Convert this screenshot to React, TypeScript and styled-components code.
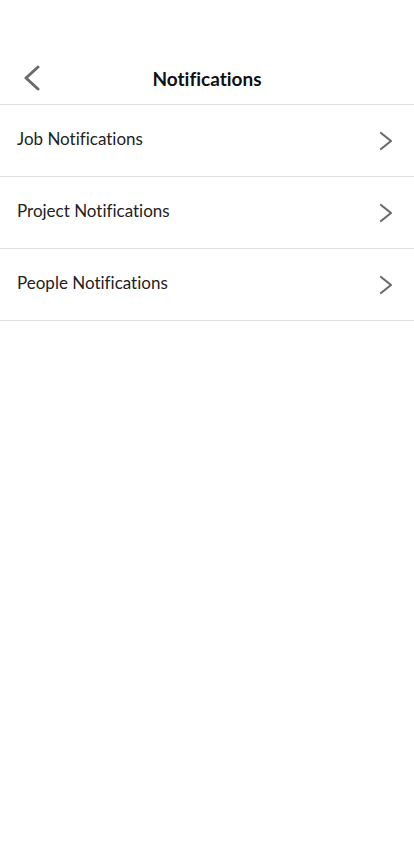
import React from "react";
import styled, { createGlobalStyle } from "styled-components";

const Global = createGlobalStyle`
  html, body { margin: 0; padding: 0; background: #fff; }
  body { font-family: "Source Sans Pro", "Lato", "Noto Sans", sans-serif; font-variant-ligatures: none; }
`;

const Page = styled.div`
  width: 414px;
  min-height: 844px;
  background: #fff;
  padding-top: 52px;
  box-sizing: border-box;
`;

const Header = styled.header`
  height: 53px;
  display: grid;
  grid-template-columns: 64px 1fr 64px;
  align-items: center;
  border-bottom: 1px solid #e0e0e0;
  box-sizing: border-box;
`;

const BackButton = styled.button`
  border: 0;
  background: none;
  padding: 0 0 0 21px;
  margin: 0;
  display: flex;
  align-items: center;
  height: 100%;
  cursor: pointer;
`;

const Title = styled.h1`
  margin: 0;
  text-align: center;
  font-size: 19px;
  font-weight: 700;
  color: #111;
`;

const List = styled.ul`
  list-style: none;
  margin: 0;
  padding: 0;
`;

const Row = styled.li`
  height: 72px;
  display: flex;
  align-items: center;
  justify-content: space-between;
  padding: 0 21px 0 17px;
  border-bottom: 1px solid #e0e0e0;
  box-sizing: border-box;
`;

const Label = styled.span`
  font-size: 17px;
  color: #222;
  margin-top: -4px;
`;

const Chevron = ({ dir }: { dir: "left" | "right" }) =>
  dir === "left" ? (
    <svg width="20" height="26" viewBox="0 0 20 26">
      <path d="M17 2 L5 13 L17 24" fill="none" stroke="#6b6b6b" strokeWidth="3" strokeLinecap="round" strokeLinejoin="round" />
    </svg>
  ) : (
    <svg width="14" height="20" viewBox="0 0 14 20">
      <path d="M2 2 L12 10 L2 18" fill="none" stroke="#6b6b6b" strokeWidth="2.2" strokeLinecap="round" strokeLinejoin="round" />
    </svg>
  );

const items = ["Job Notifications", "Project Notifications", "People Notifications"];

export default function App() {
  return (
    <Page>
      <Global />
      <Header>
        <BackButton aria-label="Back">
          <Chevron dir="left" />
        </BackButton>
        <Title>Notifications</Title>
        <span />
      </Header>
      <List>
        {items.map((t) => (
          <Row key={t}>
            <Label>{t}</Label>
            <Chevron dir="right" />
          </Row>
        ))}
      </List>
    </Page>
  );
}
